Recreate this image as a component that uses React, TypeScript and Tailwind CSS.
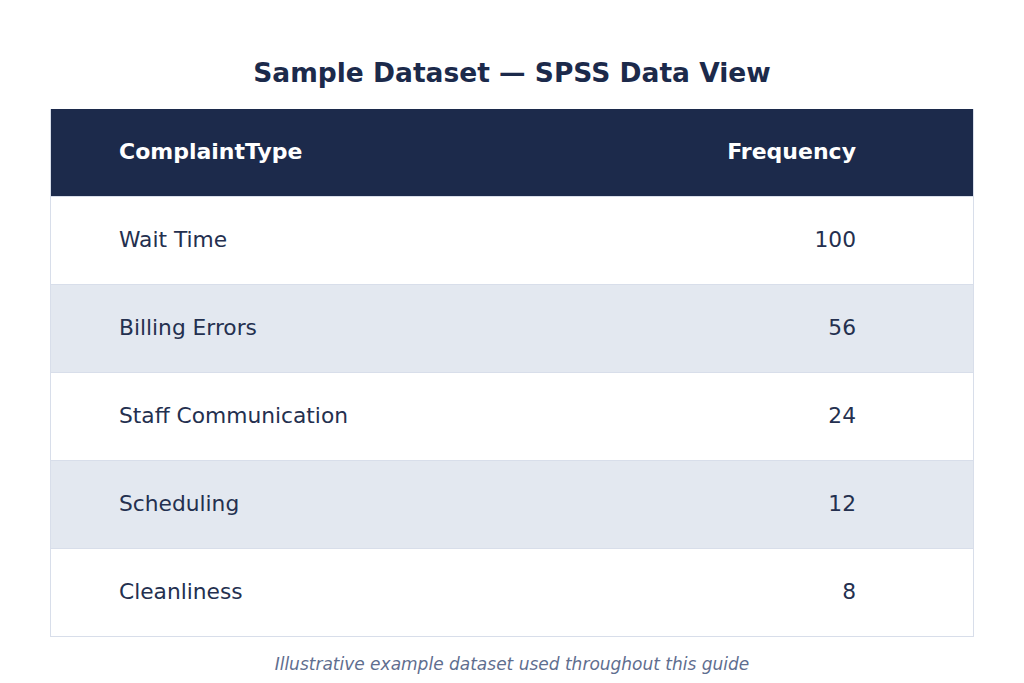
const rows = [
  { type: "Wait Time", freq: 100 },
  { type: "Billing Errors", freq: 56 },
  { type: "Staff Communication", freq: 24 },
  { type: "Scheduling", freq: 12 },
  { type: "Cleanliness", freq: 8 },
];

export default function App() {
  return (
    <div
      className="flex h-[683px] w-full flex-col items-center bg-white"
      style={{ fontFamily: '"DejaVu Sans", sans-serif' }}
    >
      <h1 className="mt-[57px] text-[26.5px] leading-[32px] font-bold text-[#1c2a4b]">
        Sample Dataset — SPSS Data View
      </h1>
      <div className="mt-[20px] w-[924px] border-x border-b border-[#d8deea]">
        <div className="flex h-[87px] items-center bg-[#1c2a4b] pr-[117px] pb-[2px] pl-[68px] text-[22px] leading-[26px] font-bold text-white">
          <div className="flex-1">ComplaintType</div>
          <div>Frequency</div>
        </div>
        {rows.map((r, i) => (
          <div
            key={r.type}
            className={
              "flex h-[88px] items-center border-t border-[#d8deea] pr-[117px] pb-[2px] pl-[68px] text-[21.75px] leading-[26px] text-[#24304f] " +
              (i % 2 === 1 ? "bg-[#e3e8f0]" : "bg-white")
            }
          >
            <div className="flex-1">{r.type}</div>
            <div>{r.freq}</div>
          </div>
        ))}
      </div>
      <p className="mt-[16px] text-[17px] leading-[22px] text-[#5f6e8f] italic">
        Illustrative example dataset used throughout this guide
      </p>
    </div>
  );
}
